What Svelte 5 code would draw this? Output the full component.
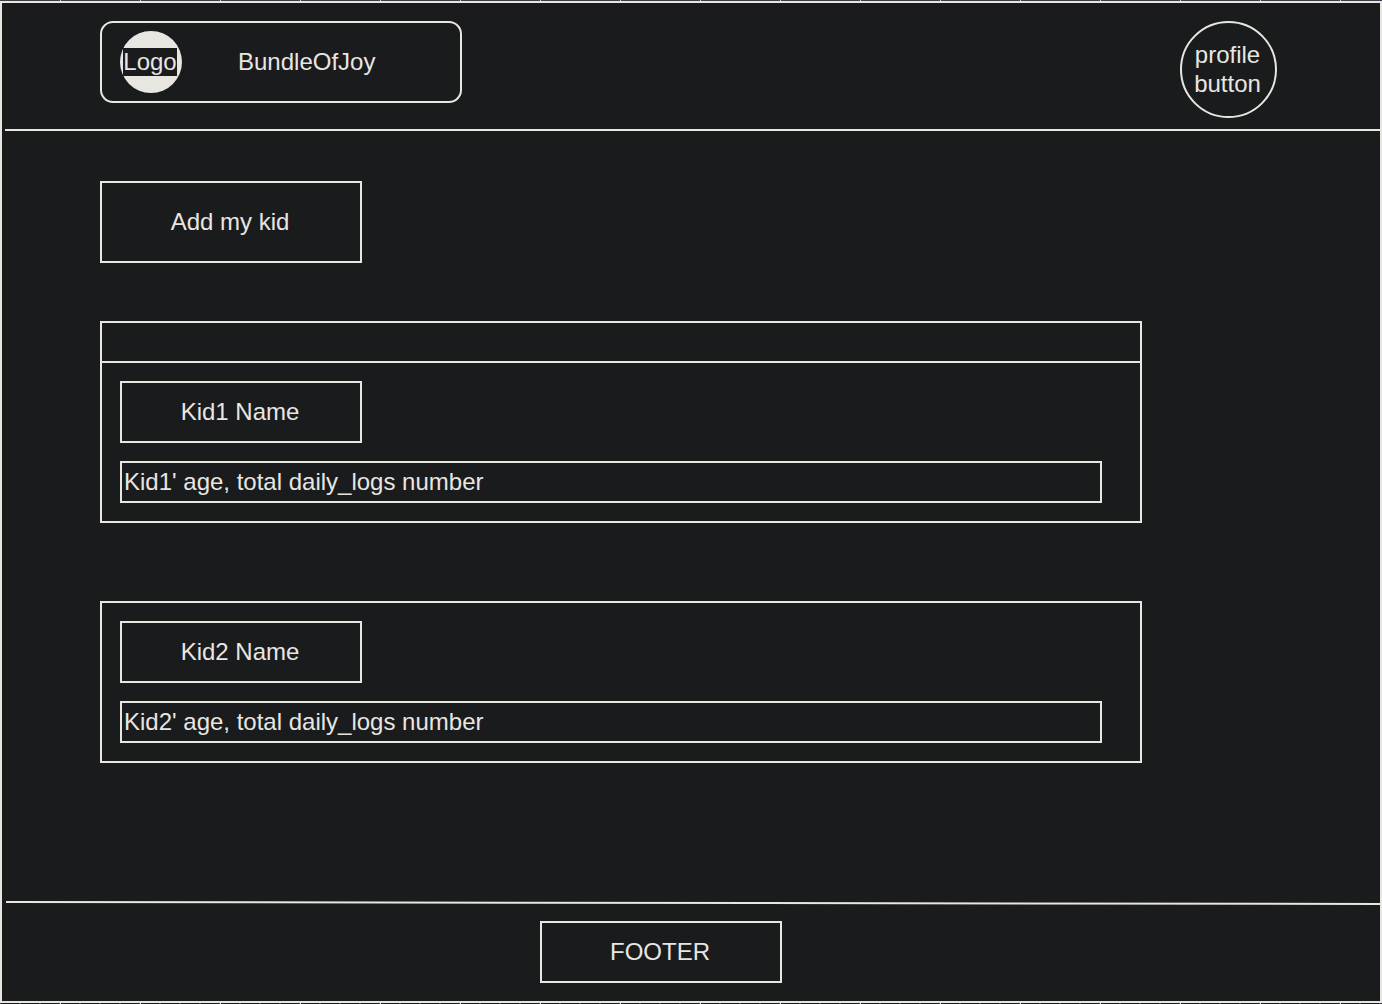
<script>
  const kids = [
    { id: 1, name: 'Kid1 Name', summary: "Kid1' age, total daily_logs number", titled: true },
    { id: 2, name: 'Kid2 Name', summary: "Kid2' age, total daily_logs number", titled: false }
  ];
</script>

<div class="page">
  <div class="ruler ruler-top"></div>
  <div class="frame">
    <header>
      <div class="brand">
        <div class="logo"><span>Logo</span></div>
        <span class="brand-name">BundleOfJoy</span>
      </div>
      <button class="profile" type="button">profile<br />button</button>
    </header>
    <div class="divider"></div>

    <main>
      <button class="add" type="button">Add my kid</button>
      <div class="cards">
        {#each kids as kid (kid.id)}
          <article>
            {#if kid.titled}
              <div class="card-bar"></div>
            {/if}
            <div class="card-body">
              <button class="name" type="button">{kid.name}</button>
              <p>{kid.summary}</p>
            </div>
          </article>
        {/each}
      </div>
    </main>

    <svg class="footer-line" viewBox="0 0 1374 4" preserveAspectRatio="none" aria-hidden="true">
      <line x1="0" y1="1" x2="1374" y2="3" />
    </svg>
    <footer>
      <div class="footer-box">FOOTER</div>
    </footer>
  </div>
  <div class="ruler ruler-bottom"></div>
</div>

<style>
  :global(body) {
    margin: 0;
    background: #1a1b1d;
  }

  .page {
    --line: #e8e6e1;
    display: flex;
    flex-direction: column;
    min-height: 100vh;
    background: #1a1b1d;
    color: #e8e6e1;
    font-family: "Liberation Sans", Helvetica, Arial, sans-serif;
    font-size: 24px;
    line-height: 29px;
  }

  .page :is(div, button, article, p, header, main, footer) {
    box-sizing: border-box;
  }

  button,
  .footer-box {
    padding: 0 2px 2px 0;
    border: 2px solid var(--line);
    background: transparent;
    color: inherit;
    font: inherit;
  }

  button {
    cursor: pointer;
  }

  .ruler {
    height: 1px;
    flex: none;
  }

  .ruler-top {
    background: repeating-linear-gradient(to right, #3f3d48 0 60px, #d5d0d8 60px 61px, #3f3d48 61px 80px);
  }

  .ruler-bottom {
    background:
      repeating-linear-gradient(to right, transparent 0 60px, #e8e6e1 60px 61px, transparent 61px 80px),
      repeating-linear-gradient(to right, #454647 0 1px, #1a1b1d 1px 19px, #454647 19px 20px);
  }

  .frame {
    display: flex;
    flex: 1;
    flex-direction: column;
    border: 2px solid var(--line);
  }

  header {
    display: flex;
    justify-content: space-between;
    align-items: flex-start;
    padding: 18px 103px 11px 98px;
  }

  .brand {
    display: flex;
    align-items: center;
    gap: 56px;
    width: 362px;
    height: 82px;
    padding: 0 18px;
    border: 2px solid var(--line);
    border-radius: 13px;
  }

  .brand-name {
    padding-bottom: 2px;
  }

  .logo {
    display: flex;
    align-items: center;
    justify-content: center;
    width: 62px;
    height: 62px;
    padding-right: 2px;
    border-radius: 50%;
    background: var(--line);
  }

  .logo span {
    background: #1a1b1d;
    line-height: 28px;
  }

  .profile {
    width: 97px;
    height: 97px;
    border-radius: 50%;
  }

  .divider {
    height: 2px;
    margin-left: 3px;
    background: var(--line);
  }

  main {
    flex: 1;
    padding: 50px 238px 58px 98px;
  }

  .add {
    display: block;
    width: 262px;
    height: 82px;
  }

  .cards {
    display: flex;
    flex-direction: column;
    gap: 78px;
    margin-top: 58px;
  }

  article {
    border: 2px solid var(--line);
  }

  .card-bar {
    height: 40px;
    border-bottom: 2px solid var(--line);
  }

  .card-body {
    display: flex;
    flex-direction: column;
    align-items: flex-start;
    gap: 18px;
    padding: 18px 38px 18px 18px;
  }

  .name,
  .footer-box {
    width: 242px;
    height: 62px;
  }

  p {
    align-self: stretch;
    margin: 0;
    padding: 4px 2px 5px;
    border: 2px solid var(--line);
  }

  .footer-line {
    display: block;
    width: calc(100% - 4px);
    height: 4px;
    margin-left: 4px;
  }

  .footer-line line {
    stroke: var(--line);
    stroke-width: 2;
  }

  footer {
    display: flex;
    justify-content: center;
    padding: 16px 60px 18px 0;
  }

  .footer-box {
    display: flex;
    align-items: center;
    justify-content: center;
  }
</style>
